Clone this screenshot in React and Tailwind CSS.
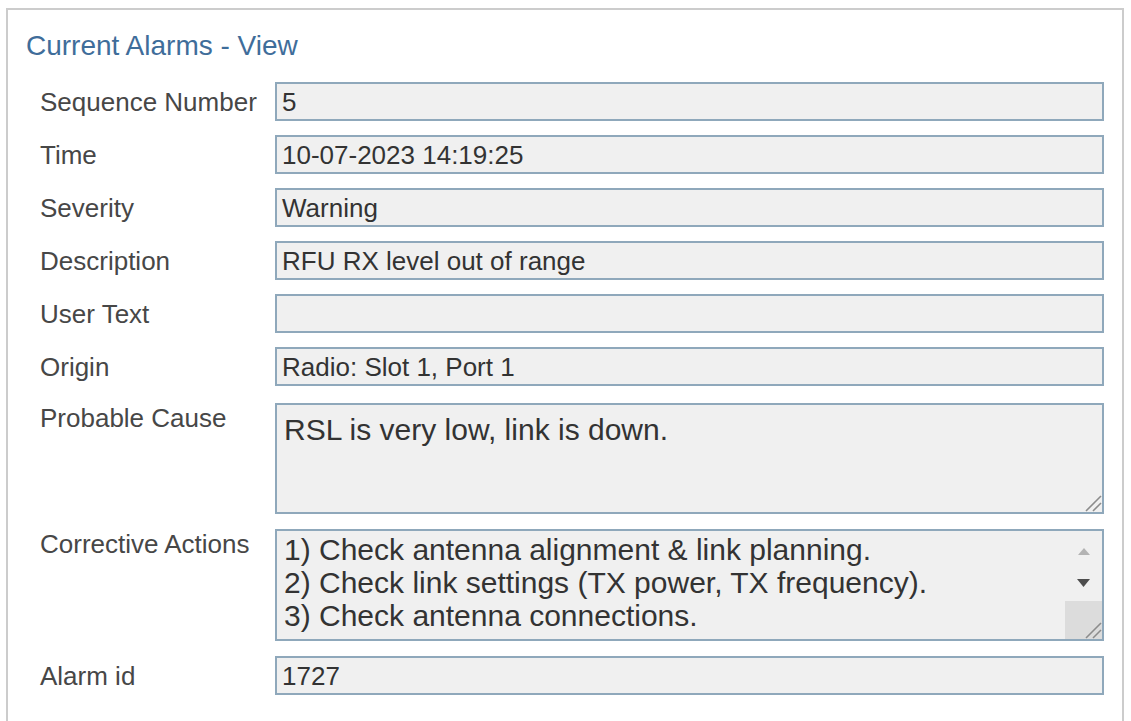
import React from 'react';

const fields = [
  { label: 'Sequence Number', value: '5' },
  { label: 'Time', value: '10-07-2023 14:19:25' },
  { label: 'Severity', value: 'Warning' },
  { label: 'Description', value: 'RFU RX level out of range' },
  { label: 'User Text', value: '' },
  { label: 'Origin', value: 'Radio: Slot 1, Port 1' },
];

const actions = [
  '1) Check antenna alignment & link planning.',
  '2) Check link settings (TX power, TX frequency).',
  '3) Check antenna connections.',
];

// little resize grip drawn in the corner of the textareas
const Grip = () => (
  <svg width="20" height="20" viewBox="0 0 20 20" className="block">
    <line x1="19" y1="4" x2="4" y2="19" stroke="#8c8c8c" strokeWidth="1.6" />
    <line x1="19" y1="11" x2="11" y2="19" stroke="#8c8c8c" strokeWidth="1.6" />
  </svg>
);

const Label = ({ children, top }) => (
  <div
    className={`w-[235px] shrink-0 text-[26px] leading-[30px] text-[#474747] ${top ? 'self-start' : ''}`}
  >
    {children}
  </div>
);

const InputRow = ({ label, value, className = '' }) => (
  <div className={`flex items-center ${className}`}>
    <Label>{label}</Label>
    <div className="flex h-[39px] flex-1 items-center border-2 border-[#8fa8bb] bg-[#f0f0f0] px-[5px] text-[26px] leading-[30px] text-[#333]">
      {value}
    </div>
  </div>
);

export default function App() {
  return (
    <div
      className="h-[721px] w-[1131px] overflow-hidden bg-white"
      style={{ fontFamily: '"Liberation Sans", Arial, sans-serif' }}
    >
      <div className="ml-[6px] mt-[8px] h-[760px] w-[1118px] border-2 border-[#cccccc] pl-[18px] pr-[18px] pt-[19px]">
        <h1 className="text-[28px] leading-[34px] font-normal text-[#3f6d9a]">
          Current Alarms - View
        </h1>

        <div className="ml-[14px] mt-[19px] flex flex-col">
          <div className="flex flex-col gap-[14px]">
            {fields.map((f) => (
              <InputRow key={f.label} label={f.label} value={f.value} />
            ))}
          </div>

          {/* Probable Cause */}
          <div className="mt-[17px] flex">
            <Label top>Probable Cause</Label>
            <div className="flex h-[111px] flex-1 border-2 border-[#8fa8bb] bg-[#f0f0f0]">
              <div className="flex-1 pl-[7px] pt-[8px] text-[30px] leading-[33px] text-[#333]">
                RSL is very low, link is down.
              </div>
              <div className="flex w-[20px] flex-col justify-end">
                <Grip />
              </div>
            </div>
          </div>

          {/* Corrective Actions */}
          <div className="mt-[15px] flex">
            <Label top>Corrective Actions</Label>
            <div className="flex h-[112px] flex-1 border-2 border-[#8fa8bb] bg-[#f0f0f0]">
              <div className="flex-1 overflow-hidden pl-[7px] pt-[2px] text-[30px] leading-[33px] text-[#333]">
                {actions.map((a) => (
                  <div key={a} className="whitespace-nowrap">{a}</div>
                ))}
              </div>
              <div className="flex w-[37px] flex-col">
                <div className="flex h-[70px] flex-col items-center pt-[17px]">
                  <svg width="12" height="7" viewBox="0 0 12 7" className="block">
                    <polygon points="0,7 6,0 12,7" fill="#b3b3b3" />
                  </svg>
                  <svg width="13" height="8" viewBox="0 0 13 8" className="mt-[24px] block">
                    <polygon points="0,0 13,0 6.5,8" fill="#4d4d4d" />
                  </svg>
                </div>
                <div className="flex flex-1 items-end justify-end bg-[#dcdcdc]">
                  <Grip />
                </div>
              </div>
            </div>
          </div>

          <InputRow className="mt-[15px]" label="Alarm id" value="1727" />
        </div>
      </div>
    </div>
  );
}
